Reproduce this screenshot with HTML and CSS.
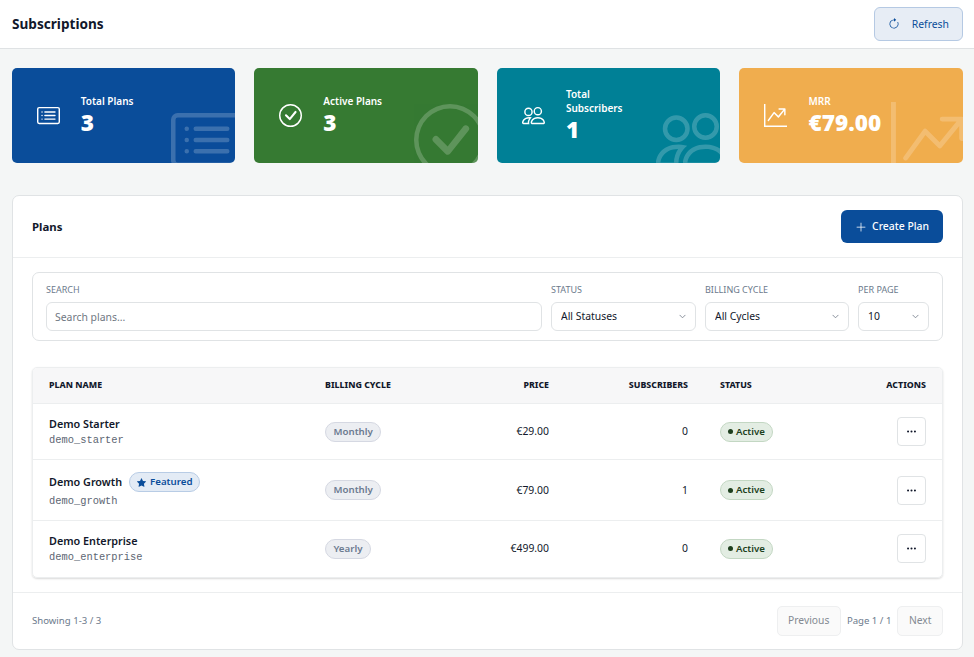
FILE: index.html
```html
<!DOCTYPE html>
<html lang="en">

<head>
  <title>Subscriptions</title>
  <meta charset="utf-8">
  <meta name="viewport" content="width=device-width, initial-scale=1.0">
  <link rel="stylesheet" href="styles.css">
</head>

<body>
  <svg class="sprite" aria-hidden="true">
    <symbol id="i-list" viewBox="0 0 16 16">
      <path d="M14.5 3a.5.5 0 0 1 .5.5v9a.5.5 0 0 1-.5.5h-13a.5.5 0 0 1-.5-.5v-9a.5.5 0 0 1 .5-.5zm-13-1A1.5 1.5 0 0 0 0 3.5v9A1.5 1.5 0 0 0 1.5 14h13a1.5 1.5 0 0 0 1.5-1.5v-9A1.5 1.5 0 0 0 14.5 2z"/>
      <path d="M5 8a.5.5 0 0 1 .5-.5h7a.5.5 0 0 1 0 1h-7A.5.5 0 0 1 5 8m0-2.5a.5.5 0 0 1 .5-.5h7a.5.5 0 0 1 0 1h-7a.5.5 0 0 1-.5-.5m0 5a.5.5 0 0 1 .5-.5h7a.5.5 0 0 1 0 1h-7a.5.5 0 0 1-.5-.5m-1-5a.5.5 0 1 1-1 0 .5.5 0 0 1 1 0M4 8a.5.5 0 1 1-1 0 .5.5 0 0 1 1 0m0 2.5a.5.5 0 1 1-1 0 .5.5 0 0 1 1 0"/>
    </symbol>
    <symbol id="i-check" viewBox="0 0 16 16">
      <path d="M8 15A7 7 0 1 1 8 1a7 7 0 0 1 0 14m0 1A8 8 0 1 0 8 0a8 8 0 0 0 0 16"/>
      <path d="m10.97 4.97-.02.022-3.473 4.425-2.093-2.094a.75.75 0 0 0-1.06 1.06L6.97 11.03a.75.75 0 0 0 1.079-.02l3.992-4.99a.75.75 0 0 0-1.071-1.05"/>
    </symbol>
    <symbol id="i-people" viewBox="0 0 16 16">
      <path d="M15 14s1 0 1-1-1-4-5-4-5 3-5 4 1 1 1 1zm-7.978-1L7 12.996c.001-.264.167-1.03.76-1.72C8.312 10.629 9.282 10 11 10c1.717 0 2.687.63 3.24 1.276.593.69.758 1.457.76 1.72l-.008.002-.014.002zM11 7a2 2 0 1 0 0-4 2 2 0 0 0 0 4m3-2a3 3 0 1 1-6 0 3 3 0 0 1 6 0M6.936 9.28a6 6 0 0 0-1.23-.247A7 7 0 0 0 5 9c-4 0-5 3-5 4q0 1 1 1h4.216A2.24 2.24 0 0 1 5 13c0-1.01.377-2.042 1.09-2.904.243-.294.526-.569.846-.816M4.92 10A5.5 5.5 0 0 0 4 13H1c0-.26.164-1.03.76-1.724.545-.636 1.492-1.256 3.16-1.275ZM1.5 5.5a3 3 0 1 1 6 0 3 3 0 0 1-6 0m3-2a2 2 0 1 0 0 4 2 2 0 0 0 0-4"/>
    </symbol>
    <symbol id="i-graph" viewBox="0 0 16 16">
      <path fill-rule="evenodd" d="M0 0h1v15h15v1H0zm10 3.5a.5.5 0 0 1 .5-.5h4a.5.5 0 0 1 .5.5v4a.5.5 0 0 1-1 0V4.9l-3.613 4.417a.5.5 0 0 1-.74.037L7.06 6.767l-3.656 5.027a.5.5 0 0 1-.808-.588l4-5.5a.5.5 0 0 1 .758-.06l2.609 2.61L13.445 4H10.5a.5.5 0 0 1-.5-.5"/>
    </symbol>
    <symbol id="i-refresh" viewBox="0 0 16 16">
      <path fill-rule="evenodd" d="M8 3a5 5 0 1 0 4.546 2.914.5.5 0 0 1 .908-.417A6 6 0 1 1 8 2z"/>
      <path d="M8 4.466V.534a.25.25 0 0 1 .41-.192l2.36 1.966c.12.1.12.284 0 .384L8.41 4.658A.25.25 0 0 1 8 4.466"/>
    </symbol>
    <symbol id="i-plus" viewBox="0 0 16 16">
      <path fill-rule="evenodd" d="M8 2a.5.5 0 0 1 .5.5v5h5a.5.5 0 0 1 0 1h-5v5a.5.5 0 0 1-1 0v-5h-5a.5.5 0 0 1 0-1h5v-5A.5.5 0 0 1 8 2"/>
    </symbol>
    <symbol id="i-dots" viewBox="0 0 16 16">
      <path d="M3 9.5a1.5 1.5 0 1 1 0-3 1.5 1.5 0 0 1 0 3m5 0a1.5 1.5 0 1 1 0-3 1.5 1.5 0 0 1 0 3m5 0a1.5 1.5 0 1 1 0-3 1.5 1.5 0 0 1 0 3"/>
    </symbol>
    <symbol id="i-star" viewBox="0 0 16 16">
      <path d="M3.612 15.443c-.386.198-.824-.149-.746-.592l.83-4.73L.173 6.765c-.329-.314-.158-.888.283-.95l4.898-.696L7.538.792c.197-.39.73-.39.927 0l2.184 4.327 4.898.696c.441.062.612.636.282.95l-3.522 3.356.83 4.73c.078.443-.36.79-.746.592L8 13.187l-4.389 2.256z"/>
    </symbol>
    <symbol id="i-chevron" viewBox="0 0 16 16">
      <path fill="none" stroke="currentColor" stroke-width="2" stroke-linecap="round" stroke-linejoin="round" d="m2 5 6 6 6-6"/>
    </symbol>
  </svg>

  <header class="topbar">
    <h1>Subscriptions</h1>
    <button class="btn btn-soft">
      <svg class="icon"><use href="#i-refresh"/></svg>
      Refresh
    </button>
  </header>

  <main class="content">
    <section class="stats">
      <div class="stat stat-blue">
        <svg class="stat-icon"><use href="#i-list"/></svg>
        <div>
          <div class="stat-label">Total Plans</div>
          <div class="stat-value">3</div>
        </div>
        <svg class="stat-bg"><use href="#i-list"/></svg>
      </div>
      <div class="stat stat-green">
        <svg class="stat-icon"><use href="#i-check"/></svg>
        <div>
          <div class="stat-label">Active Plans</div>
          <div class="stat-value">3</div>
        </div>
        <svg class="stat-bg"><use href="#i-check"/></svg>
      </div>
      <div class="stat stat-teal">
        <svg class="stat-icon"><use href="#i-people"/></svg>
        <div>
          <div class="stat-label">Total Subscribers</div>
          <div class="stat-value">1</div>
        </div>
        <svg class="stat-bg"><use href="#i-people"/></svg>
      </div>
      <div class="stat stat-orange">
        <svg class="stat-icon"><use href="#i-graph"/></svg>
        <div>
          <div class="stat-label">MRR</div>
          <div class="stat-value">€79.00</div>
        </div>
        <svg class="stat-bg"><use href="#i-graph"/></svg>
      </div>
    </section>

    <section class="panel">
      <div class="panel-head">
        <h2>Plans</h2>
        <button class="btn btn-primary">
          <svg class="icon"><use href="#i-plus"/></svg>
          Create Plan
        </button>
      </div>

      <div class="panel-body">
        <div class="filters">
          <div class="field">
            <label>Search</label>
            <input type="text" placeholder="Search plans...">
          </div>
          <div class="field">
            <label>Status</label>
            <div class="select">
              <select><option>All Statuses</option></select>
              <svg><use href="#i-chevron"/></svg>
            </div>
          </div>
          <div class="field">
            <label>Billing Cycle</label>
            <div class="select">
              <select><option>All Cycles</option></select>
              <svg><use href="#i-chevron"/></svg>
            </div>
          </div>
          <div class="field">
            <label>Per Page</label>
            <div class="select">
              <select><option>10</option></select>
              <svg><use href="#i-chevron"/></svg>
            </div>
          </div>
        </div>

        <div class="table-wrap">
          <table>
            <colgroup>
              <col class="col-name">
              <col class="col-cycle">
              <col class="col-price">
              <col class="col-subs">
              <col class="col-status">
              <col>
            </colgroup>
            <thead>
              <tr>
                <th>Plan Name</th>
                <th>Billing Cycle</th>
                <th class="right">Price</th>
                <th class="right">Subscribers</th>
                <th>Status</th>
                <th class="right">Actions</th>
              </tr>
            </thead>
            <tbody>
              <tr class="row-a">
                <td>
                  <div class="plan-name">Demo Starter</div>
                  <code>demo_starter</code>
                </td>
                <td><span class="pill pill-grey">Monthly</span></td>
                <td class="right">€29.00</td>
                <td class="right">0</td>
                <td><span class="pill pill-green"><i class="dot"></i>Active</span></td>
                <td class="right"><button class="btn-dots"><svg><use href="#i-dots"/></svg></button></td>
              </tr>
              <tr class="row-b">
                <td>
                  <div class="plan-name">Demo Growth
                    <span class="pill pill-blue"><svg><use href="#i-star"/></svg>Featured</span>
                  </div>
                  <code>demo_growth</code>
                </td>
                <td><span class="pill pill-grey">Monthly</span></td>
                <td class="right">€79.00</td>
                <td class="right">1</td>
                <td><span class="pill pill-green"><i class="dot"></i>Active</span></td>
                <td class="right"><button class="btn-dots"><svg><use href="#i-dots"/></svg></button></td>
              </tr>
              <tr class="row-a">
                <td>
                  <div class="plan-name">Demo Enterprise</div>
                  <code>demo_enterprise</code>
                </td>
                <td><span class="pill pill-grey">Yearly</span></td>
                <td class="right">€499.00</td>
                <td class="right">0</td>
                <td><span class="pill pill-green"><i class="dot"></i>Active</span></td>
                <td class="right"><button class="btn-dots"><svg><use href="#i-dots"/></svg></button></td>
              </tr>
            </tbody>
          </table>
        </div>
      </div>

      <div class="panel-foot">
        <span>Showing 1-3 / 3</span>
        <div class="pager">
          <button class="btn-page">Previous</button>
          <span>Page 1 / 1</span>
          <button class="btn-page">Next</button>
        </div>
      </div>
    </section>
  </main>
</body>

</html>
```

FILE: styles.css
```css
html,
body {
  padding: 0;
  margin: 0;
}

body {
  background: #f4f6f6;
  color: #12182b;
  font: 11px/1.4 "Noto Sans", "Open Sans", sans-serif;
}

h1,
h2 {
  margin: 0;
  font-weight: 700;
}

button,
input,
select {
  font: inherit;
}

.sprite {
  display: none;
}

.icon {
  width: 12px;
  height: 12px;
  fill: currentColor;
}

/* top bar */
.topbar {
  display: flex;
  align-items: center;
  justify-content: space-between;
  height: 48px;
  padding: 0 11px 0 12px;
  background: #fff;
  border-bottom: 1px solid #dfe2e4;
}

.topbar h1 {
  font-size: 13.6px;
}

.btn {
  display: flex;
  align-items: center;
  border-radius: 6px;
  font-size: 10.4px;
  cursor: pointer;
}

.btn-soft {
  gap: 12px;
  height: 34px;
  padding: 0 13px;
  color: #0a4d9a;
  background: #e7edf5;
  border: 1px solid #b5c9e3;
}

.btn-primary {
  gap: 5px;
  height: 33px;
  padding: 0 14px;
  color: #fff;
  background: #0a4d9a;
  border: none;
  font-weight: 500;
}

/* stat cards */
.content {
  padding: 19px 11px 7px 12px;
}

.stats {
  display: grid;
  grid-template-columns: repeat(4, 1fr);
  gap: 19px;
  margin-left: -.2px;
}

.stat {
  position: relative;
  display: flex;
  align-items: center;
  gap: 21px;
  height: 95px;
  padding-left: 25px;
  overflow: hidden;
  color: #fff;
  border-radius: 5px;
}

.stat-blue {
  background: #0a4d9a;
}

.stat-green {
  background: #367a32;
}

.stat-teal {
  background: #008096;
}

.stat-orange {
  background: #f0ad4e;
}

.stat-icon {
  flex: none;
  width: 23px;
  height: 23px;
  fill: currentColor;
}

.stat-label {
  max-width: 70px;
  font-size: 10px;
  font-weight: 600;
  line-height: 14px;
}

.stat-value {
  font-size: 22.6px;
  font-weight: 900;
  line-height: 30px;
}

.stat-bg {
  position: absolute;
  right: -8px;
  bottom: -13px;
  width: 72px;
  height: 72px;
  fill: #fff;
  opacity: .2;
}

.stat-orange .stat-bg {
  right: -6px;
  bottom: -17px;
  width: 78px;
  height: 78px;
}

/* plans panel */
.panel {
  margin-top: 32px;
  background: #fff;
  border: 1px solid #e0e3e5;
  border-radius: 7px;
}

.panel-head {
  display: flex;
  align-items: center;
  justify-content: space-between;
  height: 61px;
  padding: 0 19px;
  border-bottom: 1px solid #eceeef;
}

.panel-head h2 {
  font-size: 11.4px;
  font-weight: 700;
  line-height: 17px;
}

.panel-body {
  padding: 14px 19px;
}

.filters {
  display: grid;
  grid-template-columns: 1fr 145px 144px 71px;
  gap: 9px;
  height: 69px;
  padding: 10px 13px;
  box-sizing: border-box;
  border: 1px solid #e0e3e5;
  border-radius: 7px;
}

.field label {
  display: block;
  margin-bottom: 5px;
  color: #6c7a8c;
  font-size: 9px;
  line-height: 14px;
  text-transform: uppercase;
}

.field input,
.field select {
  display: block;
  width: 100%;
  height: 29px;
  padding: 0 8px;
  box-sizing: border-box;
  color: #12182b;
  background: #fff;
  border: 1px solid #e0e3e5;
  border-radius: 6px;
  font-size: 10.4px;
  appearance: none;
}

.field select {
  padding-left: 9px;
}

.field input::placeholder {
  color: #6f7782;
  opacity: 1;
}

.select {
  position: relative;
}

.select svg {
  position: absolute;
  top: 11px;
  right: 10px;
  width: 7px;
  height: 7px;
  color: #7b8490;
  pointer-events: none;
}

/* table */
.table-wrap {
  margin-top: 26px;
  overflow: hidden;
  border: 1px solid #eceeef;
  border-radius: 5px;
  box-shadow: 0 1px 2px rgba(0, 0, 0, .15);
}

table {
  width: 100%;
  border-collapse: collapse;
  table-layout: fixed;
}

.col-name {
  width: 276px;
}

.col-cycle {
  width: 120px;
}

.col-price {
  width: 136px;
}

.col-subs {
  width: 139px;
}

.col-status {
  width: 130px;
}

th {
  height: 35px;
  padding: 0 16px;
  background: #f7f7f8;
  border-bottom: 1px solid #eceeef;
  font-size: 8.8px;
  font-weight: 800;
  text-align: left;
  text-transform: uppercase;
}

td {
  padding: 0 16px;
  border-bottom: 1px solid #eceeef;
  font-size: 10.4px;
}

tbody tr:last-child td {
  border-bottom: none;
}

.row-a {
  height: 56px;
}

.row-b {
  height: 61px;
}

.right {
  text-align: right;
}

.plan-name {
  display: flex;
  align-items: center;
  gap: 7px;
  margin-bottom: 1px;
  font-size: 10.8px;
  font-weight: 600;
}

code {
  color: #5d6673;
  font: 10.4px/14px "Liberation Mono", monospace;
}

.pill {
  display: inline-flex;
  align-items: center;
  height: 20px;
  padding: 0 7.5px;
  box-sizing: border-box;
  vertical-align: middle;
  border: 1px solid;
  border-radius: 10px;
  font-size: 9.7px;
  font-weight: 600;
}

.pill-grey {
  color: #6b7a90;
  background: #eceef2;
  border-color: #d5d8e2;
}

.pill-green {
  padding: 0 7px;
  color: #1d3f1d;
  background: #e3ede3;
  border-color: #c3d7c3;
}

.pill-blue {
  gap: 4px;
  padding: 0 7px;
  color: #0a4d9a;
  background: #e3ebf5;
  border-color: #b8cce5;
}

.pill-blue svg {
  width: 9px;
  height: 9px;
  fill: currentColor;
}

.dot {
  width: 5px;
  height: 5px;
  margin-right: 3px;
  background: #1d3f1d;
  border-radius: 50%;
}

.btn-dots {
  display: inline-flex;
  align-items: center;
  justify-content: center;
  width: 29px;
  height: 29px;
  padding: 0;
  vertical-align: middle;
  background: #fff;
  border: 1px solid #e0e3e5;
  border-radius: 4px;
}

.btn-dots svg {
  width: 11px;
  height: 11px;
  fill: #12182b;
}

/* footer */
.panel-foot {
  display: flex;
  align-items: center;
  justify-content: space-between;
  height: 56px;
  padding: 0 19px;
  color: #6c7a8c;
  font-size: 9.6px;
  border-top: 1px solid #eceeef;
}

.pager {
  display: flex;
  align-items: center;
  gap: 6px;
}

.btn-page {
  height: 30px;
  padding: 0 10.5px;
  color: #848a92;
  background: #fafafa;
  border: 1px solid #eeeff0;
  border-radius: 5px;
  font-size: 10.3px;
}
```
